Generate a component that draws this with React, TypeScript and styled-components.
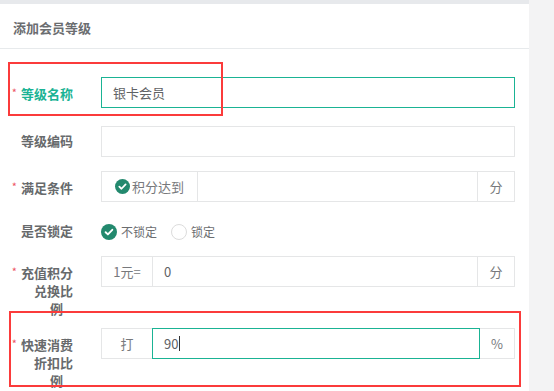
import React from 'react';
import styled, { createGlobalStyle } from 'styled-components';

const GlobalStyle = createGlobalStyle`
  html, body {
    margin: 0;
    padding: 0;
    background: #f3f3f4;
  }
  body {
    font-family: "Noto Sans CJK SC", "Noto Sans", sans-serif;
    color: #676a6c;
  }
`;

const GREEN = '#1ab394';
const ICON_GREEN = '#23896e';
const BORDER = '#e5e6e7';

const Page = styled.div`
  position: relative;
  width: 554px;
  height: 391px;
  overflow: hidden;
  display: flex;
`;

const Panel = styled.section`
  width: 529px;
  background: #fff;
  border-top: 4px solid #e7e9ec;
  box-sizing: border-box;
`;

const PanelTitle = styled.h5`
  margin: 0;
  height: 45px;
  box-sizing: border-box;
  padding: 3px 0 0 13px;
  display: flex;
  align-items: center;
  font-size: 13px;
  font-weight: 700;
  color: #6b6d70;
  border-bottom: 1px solid #e7eaec;
`;

const Form = styled.div`
  padding: 28px 14px 0 0;
  display: flex;
  flex-direction: column;
`;

const Row = styled.div<{ $mt?: number }>`
  display: flex;
  align-items: flex-start;
  margin-top: ${(p) => p.$mt ?? 0}px;
`;

const Label = styled.div<{ $active?: boolean }>`
  width: 73px;
  flex-shrink: 0;
  box-sizing: border-box;
  padding-top: 6px;
  display: flex;
  flex-direction: column;
  align-items: flex-end;
  font-size: 13px;
  font-weight: 700;
  line-height: 18px;
  color: ${(p) => (p.$active ? GREEN : '#676a6c')};
  white-space: nowrap;
`;

const LabelLine = styled.span<{ $shift?: number }>`
  display: block;
  padding-right: ${(p) => p.$shift ?? 0}px;
`;

const Required = styled.span`
  color: #ed5565;
  font-size: 11px;
  font-weight: 400;
  vertical-align: 2px;
  margin-right: 4px;
`;

const Control = styled.div<{ $center?: boolean }>`
  margin-left: 28px;
  flex: 1;
  height: 31px;
  display: flex;
  align-items: ${(p) => (p.$center ? 'center' : 'stretch')};
`;

const Field = styled.div<{ $focus?: boolean }>`
  flex: 1;
  box-sizing: border-box;
  height: 31px;
  border: 1px solid ${(p) => (p.$focus ? GREEN : BORDER)};
  display: flex;
  align-items: center;
  padding-left: 11px;
  font-size: 13px;
  color: #5f6265;
`;

const Addon = styled.div<{ $w: number; $side: 'left' | 'right' }>`
  width: ${(p) => p.$w}px;
  flex-shrink: 0;
  box-sizing: border-box;
  height: 31px;
  border: 1px solid ${BORDER};
  ${(p) => (p.$side === 'left' ? 'border-right: none;' : 'border-left: none;')}
  display: flex;
  align-items: center;
  justify-content: center;
  gap: 2px;
  font-size: 13px;
  color: #77797c;
`;

const Caret = styled.span`
  display: inline-block;
  width: 1px;
  height: 15px;
  margin-left: 1px;
  background: #333;
`;

const RadioOption = styled.span`
  display: inline-flex;
  align-items: center;
  gap: 4px;
  margin-right: 14px;
  font-size: 12px;
  color: #6b6d70;
`;

const EmptyCircle = styled.span`
  width: 16px;
  height: 16px;
  box-sizing: border-box;
  border-radius: 50%;
  border: 1px solid #dcdcdc;
  background: #fff;
`;

const Highlight = styled.div`
  position: absolute;
  box-sizing: border-box;
  border: 2px solid #fb3b3b;
  pointer-events: none;
`;

function CheckCircle({ size = 16 }: { size?: number }) {
  return (
    <svg width={size} height={size} viewBox="0 0 16 16">
      <circle cx="8" cy="8" r="8" fill={ICON_GREEN} />
      <path d="M4.6 8.2l2.3 2.2 4.4-4.6" fill="none" stroke="#fff" strokeWidth="1.9" strokeLinecap="round" strokeLinejoin="round" />
    </svg>
  );
}

function FieldLabel({ lines, required, active }: { lines: string[]; required?: boolean; active?: boolean }) {
  return (
    <Label $active={active}>
      {lines.map((line, i) => (
        <LabelLine key={i} $shift={lines.length > 2 && i === lines.length - 1 ? 10 : 0}>
          {i === 0 && required && <Required>*</Required>}
          {line}
        </LabelLine>
      ))}
    </Label>
  );
}

export default function App() {
  return (
    <Page>
      <GlobalStyle />
      <Panel>
        <PanelTitle>添加会员等级</PanelTitle>
        <Form>
          <Row>
            <FieldLabel lines={['等级名称']} required active />
            <Control>
              <Field $focus>银卡会员</Field>
            </Control>
          </Row>

          <Row $mt={18}>
            <FieldLabel lines={['等级编码']} />
            <Control>
              <Field />
            </Control>
          </Row>

          <Row $mt={14}>
            <FieldLabel lines={['满足条件']} required />
            <Control>
              <Addon $w={96} $side="left">
                <CheckCircle size={15} />
                积分达到
              </Addon>
              <Field />
              <Addon $w={37} $side="right">分</Addon>
            </Control>
          </Row>

          <Row $mt={14}>
            <FieldLabel lines={['是否锁定']} />
            <Control $center>
              <RadioOption>
                <CheckCircle />
                不锁定
              </RadioOption>
              <RadioOption>
                <EmptyCircle />
                锁定
              </RadioOption>
            </Control>
          </Row>

          <Row $mt={9}>
            <FieldLabel lines={['充值积分', '兑换比', '例']} required />
            <Control>
              <Addon $w={51} $side="left">1元=</Addon>
              <Field>0</Field>
              <Addon $w={37} $side="right">分</Addon>
            </Control>
          </Row>

          <Row $mt={10}>
            <FieldLabel lines={['快速消费', '折扣比', '例']} required />
            <Control>
              <Addon $w={51} $side="left">打</Addon>
              <Field $focus>
                90
                <Caret />
              </Field>
              <Addon $w={35} $side="right">%</Addon>
            </Control>
          </Row>
        </Form>
      </Panel>

      <Highlight style={{ left: 8, top: 62, width: 215, height: 54 }} />
      <Highlight style={{ left: 9, top: 311, width: 512, height: 76 }} />
    </Page>
  );
}
